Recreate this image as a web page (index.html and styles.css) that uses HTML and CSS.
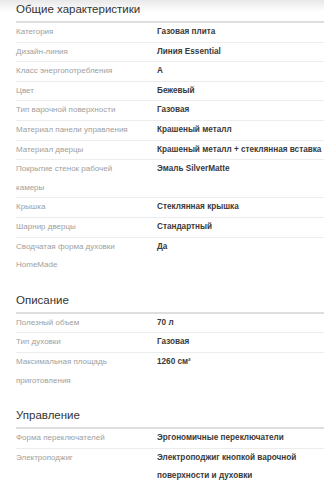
FILE: index.html
```html
<!DOCTYPE html>
<html lang="ru">
<head>
<meta charset="utf-8">
<title>Характеристики</title>
<link rel="stylesheet" href="styles.css">
</head>
<body>
<div class="specs">
  <section class="spec-group">
    <h2 class="spec-title">Общие характеристики</h2>
    <table class="spec-table">
      <tr><td class="spec-name">Категория</td><td class="spec-value">Газовая плита</td></tr>
      <tr><td class="spec-name">Дизайн-линия</td><td class="spec-value">Линия Essential</td></tr>
      <tr><td class="spec-name">Класс энергопотребления</td><td class="spec-value">A</td></tr>
      <tr><td class="spec-name">Цвет</td><td class="spec-value">Бежевый</td></tr>
      <tr><td class="spec-name">Тип варочной поверхности</td><td class="spec-value">Газовая</td></tr>
      <tr><td class="spec-name">Материал панели управления</td><td class="spec-value">Крашеный металл</td></tr>
      <tr><td class="spec-name">Материал дверцы</td><td class="spec-value">Крашеный металл + стеклянная вставка</td></tr>
      <tr><td class="spec-name">Покрытие стенок рабочей камеры</td><td class="spec-value">Эмаль SilverMatte</td></tr>
      <tr><td class="spec-name">Крышка</td><td class="spec-value">Стеклянная крышка</td></tr>
      <tr><td class="spec-name">Шарнир дверцы</td><td class="spec-value">Стандартный</td></tr>
      <tr><td class="spec-name">Сводчатая форма духовки HomeMade</td><td class="spec-value">Да</td></tr>
    </table>
  </section>

  <section class="spec-group">
    <h2 class="spec-title">Описание</h2>
    <table class="spec-table">
      <tr><td class="spec-name">Полезный объем</td><td class="spec-value">70 л</td></tr>
      <tr><td class="spec-name">Тип духовки</td><td class="spec-value">Газовая</td></tr>
      <tr><td class="spec-name">Максимальная площадь приготовления</td><td class="spec-value">1260 см²</td></tr>
    </table>
  </section>

  <section class="spec-group">
    <h2 class="spec-title">Управление</h2>
    <table class="spec-table">
      <tr><td class="spec-name">Форма переключателей</td><td class="spec-value">Эргономичные переключатели</td></tr>
      <tr><td class="spec-name">Электроподжиг</td><td class="spec-value">Электроподжиг кнопкой варочной поверхности и духовки</td></tr>
    </table>
  </section>
</div>
</body>
</html>
```

FILE: styles.css
```css
html, body {
  margin: 0;
  padding: 0;
  background: #fff;
}

body {
  font-family: "Liberation Sans", Arial, sans-serif;
  color: #333;
  background: linear-gradient(to bottom, rgba(0, 0, 0, 0.09), rgba(0, 0, 0, 0) 12px) no-repeat #fff;
  overflow: hidden;
}

.specs {
  padding-left: 16px;
}

.spec-group + .spec-group {
  margin-top: 16px;
}

.spec-title {
  margin: 0;
  padding: 1px 0 4px;
  font-size: 11.5px;
  line-height: 16px;
  font-weight: normal;
  color: #333;
  border-bottom: 2px solid #dedede;
}

.spec-table {
  width: 308px;
  border-collapse: collapse;
  table-layout: fixed;
}

.spec-table td {
  padding: 0;
  font-size: 8px;
  line-height: 18.6px;
  vertical-align: top;
  border-bottom: 1px solid #ececec;
}

.spec-table tr:last-child td {
  border-bottom: none;
}

.spec-name {
  width: 119px;
  padding-right: 22px !important;
  color: #a0a0a0;
}

.spec-table .spec-value {
  color: #3a3a3a;
  font-size: 8.2px;
  font-weight: bold;
}
```
